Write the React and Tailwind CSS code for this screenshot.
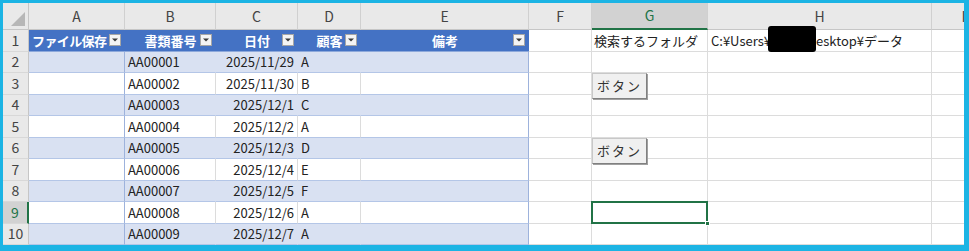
const cols = [
  { name: "A", w: "w-[96px]" },
  { name: "B", w: "w-[91px]" },
  { name: "C", w: "w-[82px]" },
  { name: "D", w: "w-[63px]" },
  { name: "E", w: "w-[168px]" },
  { name: "F", w: "w-[63px]" },
  { name: "G", w: "w-[116px]" },
  { name: "H", w: "w-[224px]" },
  { name: "I", w: "w-[64px]" },
];

const records = [
  ["AA00001", "2025/11/29", "A"],
  ["AA00002", "2025/11/30", "B"],
  ["AA00003", "2025/12/1", "C"],
  ["AA00004", "2025/12/2", "A"],
  ["AA00005", "2025/12/3", "D"],
  ["AA00006", "2025/12/4", "E"],
  ["AA00007", "2025/12/5", "F"],
  ["AA00008", "2025/12/6", "A"],
  ["AA00009", "2025/12/7", "A"],
];

function Filter() {
  return (
    <span className="absolute right-[4px] top-1/2 -translate-y-1/2 flex h-[12px] w-[12px] items-center justify-center border border-[#a6a6a6] bg-[#f4f4f4]">
      <svg width="6" height="4" viewBox="0 0 6 4">
        <path d="M0 0.5h6L3 3.5z" fill="#3a3a3a" />
      </svg>
    </span>
  );
}

function SheetButton() {
  return (
    <div className="absolute left-0 top-0 z-10 flex h-[26px] w-[55px] items-center justify-center border border-[#c8c8c8] border-r-[#808080] border-b-[#808080] bg-[#f0f0f0] text-[13px] tracking-[2px] text-[#333] shadow-[1px_1px_0_#a0a0a0]">
      ボタン
    </div>
  );
}

function HeaderCell({ col }) {
  const sel = col.name === "G";
  return (
    <div
      className={`${col.w} shrink-0 flex items-center justify-center border-r border-[#d0d0d0] text-[14px] ${
        sel
          ? "bg-[#d2d2d2] text-[#217346] border-b-2 border-b-[#217346]"
          : "bg-[#e9e9e9] text-[#444] border-b border-b-[#c6c6c6]"
      }`}
    >
      {col.name}
    </div>
  );
}

function TableHead() {
  const heads = [
    { label: "ファイル保存", w: "w-[96px]", left: true },
    { label: "書類番号", w: "w-[91px]" },
    { label: "日付", w: "w-[82px]" },
    { label: "顧客", w: "w-[63px]" },
    { label: "備考", w: "w-[168px]" },
  ];
  return heads.map((h) => (
    <div
      key={h.label}
      className={`${h.w} shrink-0 relative flex items-center ${
        h.left ? "justify-start pl-[3px] tracking-[-0.6px]" : "justify-center"
      } bg-[#4472c4] border-b border-[#8ea9db] text-[13px] font-bold text-white`}
    >
      {h.label}
      <Filter />
    </div>
  ));
}

export default function App() {
  return (
    <div className="w-[969px] h-[251px] overflow-hidden bg-[#1cb4e4] pl-[3px] pt-[3px] pr-[5px] pb-[6px] font-['Noto_Sans_CJK_JP',sans-serif]">
      <div className="h-full w-full overflow-hidden bg-white">
        <div className="flex h-[27px]">
          <div className="w-[26px] shrink-0 relative bg-[#e9e9e9] border-r border-b border-[#c6c6c6]">
            <svg className="absolute right-[3px] bottom-[3px]" width="14" height="14" viewBox="0 0 14 14">
              <path d="M14 0V14H0z" fill="#b7b7b7" />
            </svg>
          </div>
          {cols.map((c) => (
            <HeaderCell key={c.name} col={c} />
          ))}
        </div>

        <div className="flex h-[21.5px]">
          <div className="w-[26px] shrink-0 flex items-center justify-center bg-[#e9e9e9] border-r border-b border-[#c6c6c6] border-b-[#d8d8d8] text-[14px] text-[#444]">
            1
          </div>
          <TableHead />
          <div className="w-[63px] shrink-0 border-r border-b border-[#dcdcdc]" />
          <div className="w-[116px] shrink-0 flex items-center pl-[2px] border-r border-b border-[#dcdcdc] text-[13px] text-[#222] whitespace-nowrap">
            検索するフォルダ
          </div>
          <div className="w-[224px] shrink-0 relative flex items-center pl-[3px] border-r border-b border-[#dcdcdc] text-[13px] text-[#222] whitespace-nowrap">
            <span>C:¥Users¥</span>
            <span className="w-[45px] shrink-0" />
            <span>esktop¥データ</span>
            <div className="absolute left-[60px] top-[-4px] z-10 h-[26px] w-[48px] rounded-[3px] bg-black" />
          </div>
          <div className="w-[64px] shrink-0 border-b border-[#dcdcdc]" />
        </div>

        {records.map((r, i) => {
          const num = i + 2;
          const band = num % 2 === 0;
          const selRow = num === 9;
          const bg = band ? "bg-[#d9e1f2]" : "bg-white";
          const inner = band ? "border-r-[#d9e1f2]" : "border-r-[#dcdcdc]";
          return (
            <div key={num} className="flex h-[21.5px] text-[13px] text-[#222]">
              <div
                className={`w-[26px] shrink-0 flex items-center justify-center border-b border-[#d8d8d8] text-[14px] ${
                  selRow
                    ? "bg-[#d2d2d2] text-[#217346] border-r-2 border-r-[#217346]"
                    : "bg-[#e9e9e9] text-[#444] border-r border-r-[#c6c6c6]"
                }`}
              >
                {num}
              </div>
              <div className={`w-[96px] shrink-0 ${bg} border-r border-b border-[#b4c6e7] border-r-[#9db2dc]`} />
              <div className={`w-[91px] shrink-0 flex items-center pl-[3px] ${bg} border-r border-b border-b-[#b4c6e7] ${inner}`}>
                {r[0]}
              </div>
              <div className={`w-[82px] shrink-0 flex items-center justify-end pr-[3px] ${bg} border-r border-b border-b-[#b4c6e7] ${inner}`}>
                {r[1]}
              </div>
              <div className={`w-[63px] shrink-0 flex items-center pl-[3px] ${bg} border-r border-b border-b-[#b4c6e7] ${inner}`}>
                {r[2]}
              </div>
              <div className={`w-[168px] shrink-0 ${bg} border-r border-b border-b-[#b4c6e7] border-r-[#9db2dc]`} />
              <div className="w-[63px] shrink-0 border-r border-b border-[#dcdcdc]" />
              <div className="w-[116px] shrink-0 relative border-r border-b border-[#dcdcdc]">
                {(num === 3 || num === 6) && <SheetButton />}
                {selRow && (
                  <div className="absolute inset-[-1px] z-10 border-2 border-[#217346]">
                    <span className="absolute right-[-4px] bottom-[-4px] h-[5px] w-[5px] bg-[#217346] border border-white" />
                  </div>
                )}
              </div>
              <div className="w-[224px] shrink-0 border-r border-b border-[#dcdcdc]" />
              <div className="w-[64px] shrink-0 border-b border-[#dcdcdc]" />
            </div>
          );
        })}
      </div>
    </div>
  );
}
